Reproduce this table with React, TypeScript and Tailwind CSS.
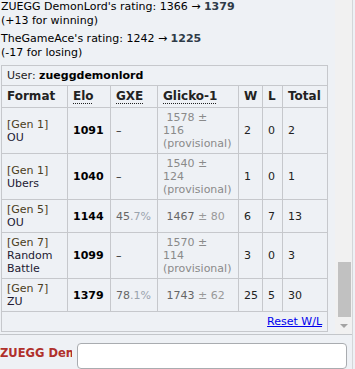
import React from "react";

type Row = {
  gen: string;
  name: string;
  elo: number;
  gxe?: [string, string];
  glicko: { value: string; dev: string; provisional: boolean };
  w: number;
  l: number;
  total: number;
};

const rows: Row[] = [
  { gen: "[Gen 1]", name: "OU", elo: 1091, glicko: { value: "1578", dev: "116", provisional: true }, w: 2, l: 0, total: 2 },
  { gen: "[Gen 1]", name: "Ubers", elo: 1040, glicko: { value: "1540", dev: "124", provisional: true }, w: 1, l: 0, total: 1 },
  { gen: "[Gen 5]", name: "OU", elo: 1144, gxe: ["45", ".7%"], glicko: { value: "1467", dev: "80", provisional: false }, w: 6, l: 7, total: 13 },
  { gen: "[Gen 7]", name: "Random Battle", elo: 1099, glicko: { value: "1570", dev: "114", provisional: true }, w: 3, l: 0, total: 3 },
  { gen: "[Gen 7]", name: "ZU", elo: 1379, gxe: ["78", ".1%"], glicko: { value: "1743", dev: "62", provisional: false }, w: 25, l: 5, total: 30 },
];

const td = "border border-[#c6c8cc] px-[5px] py-[3px] align-middle";
const th = "border border-[#c6c8cc] px-[5px] py-[3px] text-left text-[12px] leading-[15px] font-bold";
const abbr = "underline decoration-dotted decoration-1 underline-offset-[3px]";

function Glicko({ g }: { g: Row["glicko"] }) {
  if (g.provisional) {
    return (
      <span className="text-[#8a8a8a]">
        {"\u00a0" + g.value} ±<br />
        {g.dev}
        <br />
        (provisional)
      </span>
    );
  }
  return (
    <span>
      <span className="text-[#666]">{"\u00a0" + g.value}</span>
      <span className="text-[#999]"> ± {g.dev}</span>
    </span>
  );
}

function LadderTable() {
  return (
    <table className="w-[327px] table-fixed border-collapse text-[11px] leading-[13px] text-[#222]">
      <colgroup>
        <col className="w-[66px]" />
        <col className="w-[43px]" />
        <col className="w-[47px]" />
        <col className="w-[81px]" />
        <col className="w-[24px]" />
        <col className="w-[20px]" />
        <col className="w-[45px]" />
      </colgroup>
      <tbody>
        <tr>
          <td colSpan={7} className={td}>
            User: <strong className="text-black">zueggdemonlord</strong>
          </td>
        </tr>
        <tr>
          <th className={th}>Format</th>
          <th className={th}>
            <span className={abbr}>Elo</span>
          </th>
          <th className={th}>
            <span className={abbr}>GXE</span>
          </th>
          <th className={th}>
            <span className={abbr}>Glicko-1</span>
          </th>
          <th className={th}>W</th>
          <th className={th}>L</th>
          <th className={th}>Total</th>
        </tr>
        {rows.map((r, i) => (
          <tr key={i}>
            <td className={td}>
              <span className="text-[#4a3d22]">{r.gen}</span>
              <br />
              <span className="text-[#221a33]">{r.name}</span>
            </td>
            <td className={td}>
              <strong className="text-black">{r.elo}</strong>
            </td>
            <td className={td}>
              {r.gxe ? (
                <span>
                  <span className="text-[#666]">{r.gxe[0]}</span>
                  <span className="text-[#9aa3ad]">{r.gxe[1]}</span>
                </span>
              ) : (
                "–"
              )}
            </td>
            <td className={td}>
              <Glicko g={r.glicko} />
            </td>
            <td className={td}>{r.w}</td>
            <td className={td}>{r.l}</td>
            <td className={td}>{r.total}</td>
          </tr>
        ))}
        <tr>
          <td colSpan={7} className={td + " text-right"}>
            <a href="#" className="text-[#0000ee] underline">
              Reset W/L
            </a>
          </td>
        </tr>
      </tbody>
    </table>
  );
}

export default function App() {
  return (
    <div className="flex h-[369px] w-[355px] overflow-hidden bg-[#eef1f5] font-['DejaVu_Sans','Verdana',sans-serif] text-black">
      <div className="flex w-[352px] flex-col">
        {/* battle log */}
        <div className="flex h-[339px]">
          <div className="w-[335px] overflow-hidden pl-[1px] text-[11px] leading-[14px]">
            <p>
              ZUEGG DemonLord's rating: 1366 → <strong className="text-[#2f3b48]">1379</strong>
              <br />
              (+13 for winning)
            </p>
            <p className="mt-[4px]">
              TheGameAce's rating: 1242 → <strong className="text-[#2f3b48]">1225</strong>
              <br />
              (-17 for losing)
            </p>
            <div className="mt-[5px]">
              <LadderTable />
            </div>
          </div>
          {/* scrollbar */}
          <div className="flex w-[17px] flex-col justify-end bg-[#f1f1f1]">
            <div className="ml-[3px] h-[55px] w-[13px] bg-[#c1c1c1]" />
            <div className="flex h-[17px] items-center justify-center">
              <div className="h-0 w-0 border-x-[4px] border-t-[4px] border-x-transparent border-t-[#a3a3a3]" />
            </div>
          </div>
        </div>
        <div className="h-px bg-[#c3c6ca]" />
        {/* chat input */}
        <div className="flex items-start pt-[8px]">
          <div className="w-[72px] shrink-0 overflow-hidden whitespace-nowrap pt-[3px] text-[11.5px] font-bold leading-[14px] text-[#b0302c]">
            ZUEGG Dem
          </div>
          <div className="ml-[5px] h-[26px] w-[270px] rounded-[4px] border border-[#a9acb0] bg-white" />
        </div>
      </div>
      <div className="w-px bg-[#d4d6d9]" />
    </div>
  );
}
